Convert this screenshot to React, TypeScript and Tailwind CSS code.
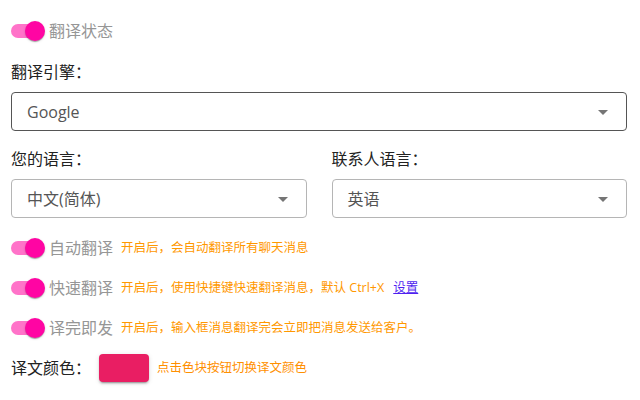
import React from "react";

// Pink MUI-like switch, always on
const Toggle = () => (
  <span className="relative inline-block w-[34px] h-[20px] shrink-0">
    <span className="absolute left-0 top-[3px] w-[33px] h-[14px] rounded-full bg-[#ff73c9]" />
    <span className="absolute left-[14px] top-0 w-[20px] h-[20px] rounded-full bg-[#ff05a3] shadow-[0_2px_1px_-1px_rgba(0,0,0,0.2),0_1px_1px_0_rgba(0,0,0,0.14),0_1px_3px_0_rgba(0,0,0,0.12)]" />
  </span>
);

const Arrow = () => (
  <svg viewBox="0 0 24 24" className="w-[24px] h-[24px] fill-[#757575]">
    <path d="M7 10l5 5 5-5z" />
  </svg>
);

const Select = ({ value, dark }: { value: string; dark?: boolean }) => (
  <div
    className={`flex items-center justify-between h-[39px] rounded-[4px] border pl-[15px] pr-[11px] ${
      dark ? "border-[#555555]" : "border-[#b5b5b5]"
    }`}
  >
    <span className="text-[16px] text-[#555555]">{value}</span>
    <Arrow />
  </div>
);

const SwitchRow = ({ label, children }: { label: string; children: React.ReactNode }) => (
  <div className="flex items-center h-[20px] mt-[20px]">
    <Toggle />
    <span className="ml-[4px] text-[16px] leading-[20px] text-[#969696]">{label}</span>
    <span className="ml-[8px] text-[12.5px] text-[#ff9800]">{children}</span>
  </div>
);

export default function App() {
  return (
    <div className="w-[640px] h-[400px] bg-white pl-[11px] pr-[13px] pt-[21px] font-['Open_Sans','Noto_Sans_CJK_SC',sans-serif]">
      <div className="flex items-center h-[20px]">
        <Toggle />
        <span className="ml-[4px] text-[16px] leading-[20px] text-[#969696]">翻译状态</span>
      </div>

      <div className="mt-[19px] text-[16px] leading-[24px] text-[#222222]">翻译引擎：</div>
      <div className="mt-[8px]">
        <Select value="Google" dark />
      </div>

      <div className="grid grid-cols-2 gap-x-[25px] mt-[16px]">
        <div>
          <div className="text-[16px] leading-[24px] text-[#222222]">您的语言：</div>
          <div className="mt-[8px]">
            <Select value="中文(简体)" />
          </div>
        </div>
        <div>
          <div className="text-[16px] leading-[24px] text-[#222222]">联系人语言：</div>
          <div className="mt-[8px]">
            <Select value="英语" />
          </div>
        </div>
      </div>

      <div className="mt-[4px]">
        <SwitchRow label="自动翻译">开启后，会自动翻译所有聊天消息</SwitchRow>
        <SwitchRow label="快速翻译">
          开启后，使用快捷键快速翻译消息，默认 Ctrl+X
          <a className="ml-[9px] text-[#4f1ff0] underline">设置</a>
        </SwitchRow>
        <SwitchRow label="译完即发">开启后，输入框消息翻译完会立即把消息发送给客户。</SwitchRow>
      </div>

      <div className="flex items-center mt-[16px] h-[28px]">
        <span className="text-[16px] text-[#222222]">译文颜色：</span>
        <button className="ml-[8px] w-[50px] h-[28px] rounded-[4px] bg-[#e91e63] shadow-[0_3px_1px_-2px_rgba(0,0,0,0.2),0_2px_2px_0_rgba(0,0,0,0.14),0_1px_5px_0_rgba(0,0,0,0.12)]" />
        <span className="ml-[8px] text-[12.5px] text-[#ff8f00]">点击色块按钮切换译文颜色</span>
      </div>
    </div>
  );
}
